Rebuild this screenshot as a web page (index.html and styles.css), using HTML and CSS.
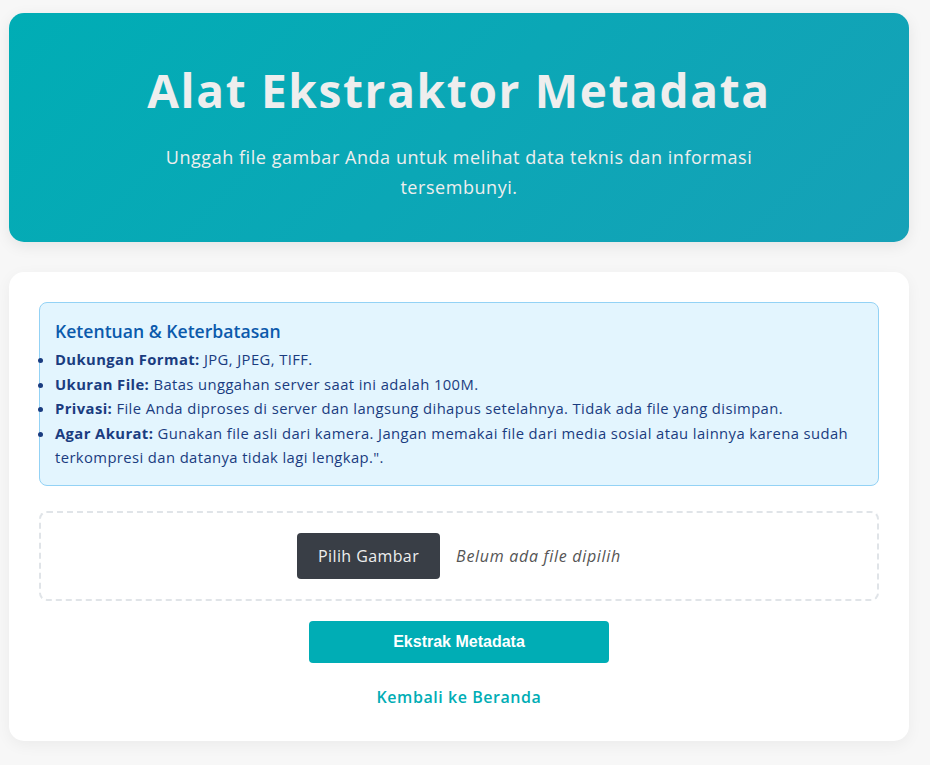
FILE: index.html
```html
<!DOCTYPE html>
<html lang="id">
<head>
  <meta charset="UTF-8">
  <meta name="viewport" content="width=device-width, initial-scale=1.0">
  <title>Alat Ekstraktor Metadata</title>
  <link rel="stylesheet" href="styles.css">
</head>
<body>
  <div class="container">
    <header class="hero">
      <h1>Alat Ekstraktor Metadata</h1>
      <p>Unggah file gambar Anda untuk melihat data teknis dan informasi tersembunyi.</p>
    </header>

    <main class="card">
      <!-- Ketentuan -->
      <div class="notice">
        <h3>Ketentuan &amp; Keterbatasan</h3>
        <ul>
          <li><strong>Dukungan Format:</strong> JPG, JPEG, TIFF.</li>
          <li><strong>Ukuran File:</strong> Batas unggahan server saat ini adalah 100M.</li>
          <li><strong>Privasi:</strong> File Anda diproses di server dan langsung dihapus setelahnya. Tidak ada file yang disimpan.</li>
          <li><strong>Agar Akurat:</strong> Gunakan file asli dari kamera. Jangan memakai file dari media sosial atau lainnya karena sudah terkompresi dan datanya tidak lagi lengkap.".</li>
        </ul>
      </div>

      <!-- Upload -->
      <form class="upload-form" onsubmit="return false;">
        <div class="dropzone">
          <label for="file" class="pick-btn">Pilih Gambar</label>
          <input type="file" id="file" accept=".jpg,.jpeg,.tif,.tiff">
          <span id="file-name" class="file-name">Belum ada file dipilih</span>
        </div>
        <button type="submit" class="extract-btn">Ekstrak Metadata</button>
      </form>

      <a href="#" class="back-link">Kembali ke Beranda</a>
    </main>
  </div>

  <script>
    document.getElementById('file').addEventListener('change', function() {
      const name = this.files.length ? this.files[0].name : 'Belum ada file dipilih';
      document.getElementById('file-name').textContent = name;
    });
  </script>
</body>
</html>
```

FILE: styles.css
```css
body { font-family: 'Open Sans', sans-serif; background: #f7f7f7; margin: 0; padding: 13px 21px 25px 9px; color: #393e46; }
.container { max-width: 900px; margin: 0 auto; }

.hero { background: linear-gradient(135deg, #00adb5, #16a1b7); color: #eeeeee; text-align: center; padding: 50px 40px 40px; border-radius: 15px; box-shadow: 0 4px 15px rgba(0,0,0,0.08); }
.hero h1 { font-family: 'Open Sans', sans-serif; font-size: 46px; font-weight: 700; letter-spacing: 1.65px; line-height: 54px; margin: 0 0 25px; }
.hero p { font-size: 18px; letter-spacing: 0.55px; line-height: 30px; max-width: 620px; margin: 0 auto; }

.card { display: block; background: #fff; margin-top: 30px; padding: 30px 30px 32px; border-radius: 15px; box-shadow: 0 4px 15px rgba(0,0,0,0.05); }

.notice { background: #e3f5fe; border: 1px solid #93d2f5; border-radius: 8px; padding: 15px; color: #1a3c80; }
.notice h3 { margin: 0 0 3px; font-size: 17.6px; font-weight: 600; line-height: 26px; color: #0b5aac; }
.notice ul { margin: 0; padding: 0; font-size: 14.8px; letter-spacing: 0.4px; line-height: 24.5px; }
.notice li strong { font-weight: 700; }

.upload-form { display: flex; flex-direction: column; align-items: center; }
.dropzone { align-self: stretch; display: flex; align-items: center; justify-content: center; gap: 16px; margin-top: 25px; padding: 20px; border: 2px dashed #e0e4e8; border-radius: 8px; }
.dropzone input[type="file"] { display: none; }
.pick-btn { background: #393e46; color: #eeeeee; font-size: 16px; letter-spacing: 0.4px; line-height: 22px; padding: 12px 21px; border-radius: 4px; cursor: pointer; }
.file-name { font-style: italic; font-size: 16px; letter-spacing: 0.7px; color: #555; }

.extract-btn { width: 300px; margin-top: 20px; padding: 11px 0; background: #00adb5; color: #fff; border: none; border-radius: 4px; font-family: 'Liberation Sans', Arial, sans-serif; font-size: 16px; font-weight: 700; line-height: 20px; cursor: pointer; }

.back-link { display: block; width: max-content; margin: 22px auto 0; color: #00adb5; font-size: 16px; font-weight: 600; letter-spacing: 0.55px; line-height: 24px; text-decoration: none; }
```
